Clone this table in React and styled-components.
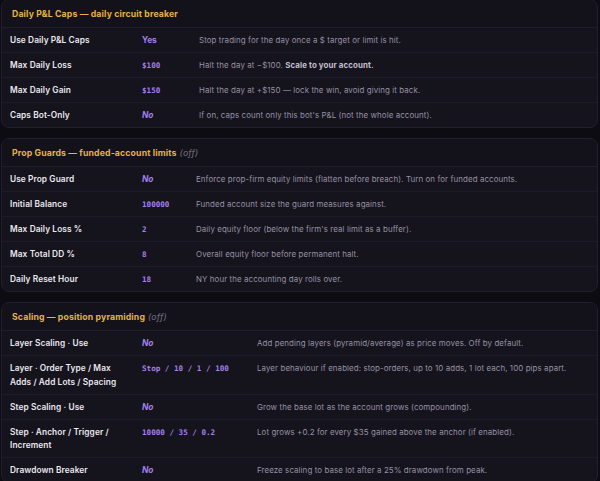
import React from "react";
import styled, { createGlobalStyle } from "styled-components";

const GlobalStyle = createGlobalStyle`
  html, body {
    margin: 0;
    padding: 0;
    background: #0d0c12;
  }
  body {
    font-family: Inter, "Noto Sans", sans-serif;
    -webkit-font-smoothing: antialiased;
  }
`;

const Page = styled.div`
  display: flex;
  flex-direction: column;
  gap: 10px;
  padding: 0 2px 0 1px;
  margin-top: -1px;
`;

const Card = styled.section`
  background: #15131c;
  border: 1px solid #221f30;
  border-radius: 8px;
  overflow: hidden;
`;

const CardHeader = styled.div`
  height: 27px;
  display: flex;
  align-items: center;
  padding: 0 10px;
  background: #131119;
  border-bottom: 1px solid #201d2c;
  font-size: 8.7px;
  font-weight: 700;
  color: #e3b24b;
  letter-spacing: 0.15px;
`;

const Off = styled.span`
  margin-left: 3px;
  font-style: italic;
  font-weight: 500;
  color: #6a6577;
`;

const Row = styled.div`
  display: grid;
  grid-template-columns: 132px ${(p) => p.$valueWidth}px 1fr;
  align-items: start;
  padding: 6px 8px 4.5px;
  line-height: 13.5px;
  & + & {
    border-top: 1px solid #1e1b29;
  }
`;

const Label = styled.div`
  font-size: 8.3px;
  font-weight: 600;
  color: #eae8f0;
  letter-spacing: 0.1px;
  padding-right: 20px;
`;

const Value = styled.div`
  font-family: ${(p) => (p.$mono ? '"DejaVu Sans Mono", "Liberation Mono", monospace' : 'Inter, "Noto Sans", sans-serif')};
  font-size: ${(p) => (p.$mono ? "7.6px" : "8.3px")};
  font-weight: 700;
  font-style: ${(p) => (p.$italic ? "italic" : "normal")};
  color: #a57fec;
  white-space: pre;
`;

const Desc = styled.div`
  font-size: 7.9px;
  color: #9792a6;
  letter-spacing: 0.1px;
  white-space: nowrap;
  b {
    font-weight: 700;
    color: #c4bfd0;
  }
`;

const sections = [
  {
    title: "Daily P&L Caps — daily circuit breaker",
    off: false,
    valueWidth: 57,
    rows: [
      { label: "Use Daily P&L Caps", value: "Yes", desc: "Stop trading for the day once a $ target or limit is hit." },
      { label: "Max Daily Loss", value: "$100", mono: true, desc: <>Halt the day at −$100. <b>Scale to your account.</b></> },
      { label: "Max Daily Gain", value: "$150", mono: true, desc: "Halt the day at +$150 — lock the win, avoid giving it back." },
      { label: "Caps Bot-Only", value: "No", italic: true, desc: "If on, caps count only this bot's P&L (not the whole account)." },
    ],
  },
  {
    title: "Prop Guards — funded-account limits",
    off: true,
    valueWidth: 54,
    rows: [
      { label: "Use Prop Guard", value: "No", italic: true, desc: "Enforce prop-firm equity limits (flatten before breach). Turn on for funded accounts." },
      { label: "Initial Balance", value: "100000", mono: true, desc: "Funded account size the guard measures against." },
      { label: "Max Daily Loss %", value: "2", mono: true, desc: "Daily equity floor (below the firm's real limit as a buffer)." },
      { label: "Max Total DD %", value: "8", mono: true, desc: "Overall equity floor before permanent halt." },
      { label: "Daily Reset Hour", value: "18", mono: true, desc: "NY hour the accounting day rolls over." },
    ],
  },
  {
    title: "Scaling — position pyramiding",
    off: true,
    valueWidth: 115,
    rows: [
      { label: "Layer Scaling · Use", value: "No", italic: true, desc: "Add pending layers (pyramid/average) as price moves. Off by default." },
      { label: "Layer · Order Type / Max Adds / Add Lots / Spacing", value: "Stop / 10 / 1 / 100", mono: true, desc: "Layer behaviour if enabled: stop-orders, up to 10 adds, 1 lot each, 100 pips apart." },
      { label: "Step Scaling · Use", value: "No", italic: true, desc: "Grow the base lot as the account grows (compounding)." },
      { label: "Step · Anchor / Trigger / Increment", value: "10000 / 35 / 0.2", mono: true, desc: "Lot grows +0.2 for every $35 gained above the anchor (if enabled)." },
      { label: "Drawdown Breaker", value: "No", italic: true, desc: "Freeze scaling to base lot after a 25% drawdown from peak." },
    ],
  },
];

export default function App() {
  return (
    <>
      <GlobalStyle />
      <Page>
        {sections.map((s) => (
          <Card key={s.title}>
            <CardHeader>
              {s.title}
              {s.off && <Off>(off)</Off>}
            </CardHeader>
            {s.rows.map((r) => (
              <Row key={r.label} $valueWidth={s.valueWidth}>
                <Label>{r.label}</Label>
                <Value $mono={r.mono} $italic={r.italic}>{r.value}</Value>
                <Desc>{r.desc}</Desc>
              </Row>
            ))}
          </Card>
        ))}
      </Page>
    </>
  );
}
